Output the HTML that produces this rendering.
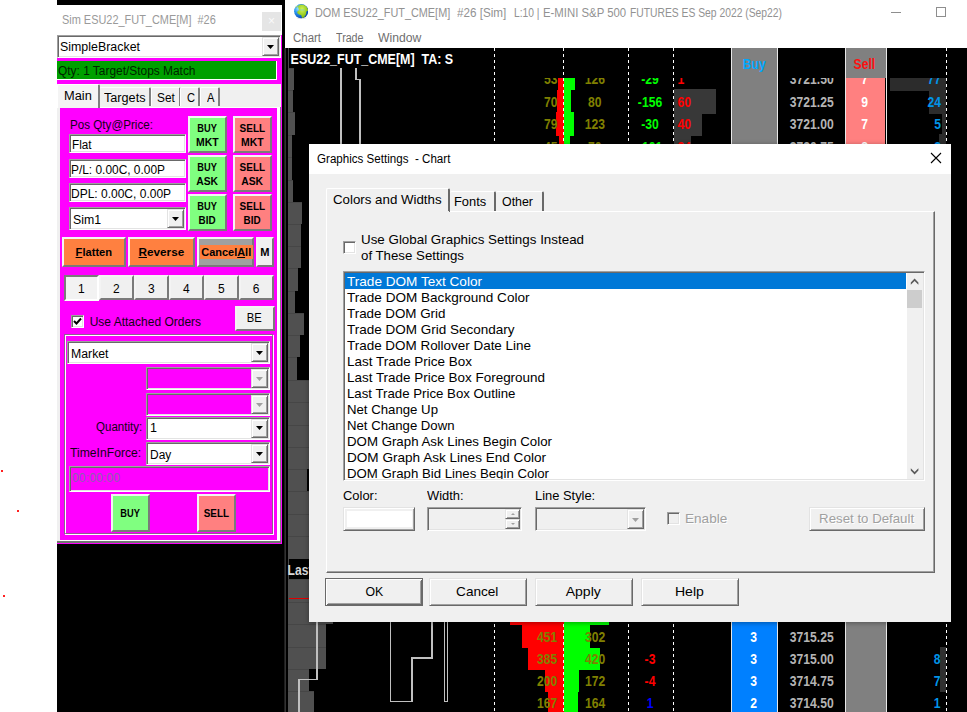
<!DOCTYPE html>
<html lang="en"><head><meta charset="utf-8"><title>Sierra Chart DOM - Graphics Settings</title>
<style>
html,body{margin:0;padding:0;background:#fff}
#root{position:relative;width:967px;height:712px;overflow:hidden;background:#fff;font-family:"Liberation Sans",sans-serif;font-size:12px;color:#000}
#root div{position:absolute;box-sizing:border-box}
.t{position:absolute;white-space:nowrap;transform-origin:0 50%;display:block}
.tcw{position:absolute;white-space:nowrap;text-align:center;display:block}
.tc{display:inline-block;transform-origin:50% 50%}
.ui{font-family:"Liberation Sans",sans-serif}
.b{font-weight:bold}
.mg{background:#ff00ff}
.face{background:#f0f0f0}
.btn{border:1px solid;border-color:#e3e3e3 #696969 #696969 #e3e3e3;box-shadow:inset 1px 1px 0 #fff,inset -1px -1px 0 #a0a0a0;background:#f0f0f0}
.cbtn{border:2px solid;border-color:#f4f4f4 #7a7a7a #7a7a7a #f4f4f4}
.sunk{border:1px solid;border-color:#a0a0a0 #fff #fff #a0a0a0;box-shadow:inset 1px 1px 0 #696969,inset -1px -1px 0 #e3e3e3;background:#fff}
.grn{background:#80ff80}
.red{background:#ff8080}
.org{background:#ff8040}
.arrow{width:0;height:0;border-left:4px solid transparent;border-right:4px solid transparent;border-top:4px solid #000}
.pt{color:#120016}
svg{position:absolute;left:0;top:0}
svg text{font-family:"Liberation Sans",sans-serif;font-weight:bold}
u{text-decoration:underline}
</style></head>
<body>
<div id="root">
<div style="left:57px;top:0px;width:228px;height:5px;background:#000"></div>
<div style="left:57px;top:544px;width:228px;height:168px;background:#000"></div>
<div style="left:282px;top:0px;width:3px;height:712px;background:#000"></div>
<div style="left:1px;top:470px;width:2px;height:2px;background:#ff2020"></div>
<div style="left:17px;top:510px;width:2px;height:2px;background:#ff2020"></div>
<div style="left:2.5px;top:595px;width:2px;height:2px;background:#ff2020"></div>
<div id="sim" class="mg" style="left:57px;top:5px;width:225px;height:539px;">
<div style="left:0px;top:0px;width:225px;height:30px;background:#fff"></div>
<span class="t" style="left: 5px; top: 6.5px; line-height: 16px; height: 16px; font-size: 12px; color: rgb(154, 154, 154); white-space: pre; transform: scaleX(0.9113);">Sim ESU22_FUT_CME[M]  #26</span>
<div style="left:205px;top:7px;width:19px;height:19px;background:#e5e5e5"></div>
<span class="tcw" style="left:205px;top:8px;width:19px;line-height:16px;height:16px;font-size:12px;color:#fafafa;"><span class="tc">×</span></span>
<div class="sunk" style="left:0px;top:30px;width:224px;height:23px;background:#fff;"></div>
<div class="btn" style="left:205px;top:32px;width:17px;height:19px;"></div>
<div style="left:210px;top:40px;width:7px;height:4px;background:#000;clip-path:polygon(0 0,100% 0,50% 100%);"></div>
<span class="t" style="left: 3px; top: 33.7px; line-height: 16px; height: 16px; font-size: 12.5px; transform: scaleX(0.9926);">SimpleBracket</span>
<div style="left:0px;top:56px;width:220px;height:19px;background:#00a000;border-right:1px solid #fff;border-bottom:1px solid #fff;"></div>
<span class="t" style="left: 0.5px; top: 57.5px; line-height: 16px; height: 16px; font-size: 12.5px; color: rgb(0, 36, 0); transform: scaleX(0.953);">Qty: 1 Target/Stops Match</span>
<div class="face" style="left:0px;top:79px;width:224px;height:24px;"></div>
<div style="left:0px;top:102px;width:224px;height:435.5px;background:#ff00ff;border-style:solid;border-width:1px 4px 3.5px 3px;border-color:#fff #fff #fff #f0f0f0"></div>
<div style="left:223px;top:102px;width:1px;height:435.5px;background:#808080"></div>
<div style="left:0px;top:536px;width:224px;height:1.5px;background:#707870"></div>
<div class="face" style="left:42px;top:82px;width:52px;height:19px;border-top:1px solid #fff;border-left:1px solid #fff;border-right:2px solid #808080;border-radius:2px 2px 0 0"></div>
<span class="t" style="left: 46.6px; top: 84.5px; line-height: 16px; height: 16px; font-size: 12px; transform: scaleX(1.0544);">Targets</span>
<div class="face" style="left:94px;top:82px;width:29.5px;height:19px;border-top:1px solid #fff;border-left:1px solid #fff;border-right:2px solid #808080;border-radius:2px 2px 0 0"></div>
<span class="t" style="left: 100.2px; top: 84.5px; line-height: 16px; height: 16px; font-size: 12px; transform: scaleX(0.988);">Set</span>
<div class="face" style="left:123px;top:82px;width:20px;height:19px;border-top:1px solid #fff;border-left:1px solid #fff;border-right:2px solid #808080;border-radius:2px 2px 0 0"></div>
<span class="t" style="left: 130px; top: 84.5px; line-height: 16px; height: 16px; font-size: 12px; transform: scaleX(0.9225);">C</span>
<div class="face" style="left:143px;top:82px;width:19.5px;height:19px;border-top:1px solid #fff;border-left:1px solid #fff;border-right:2px solid #808080;border-radius:2px 2px 0 0"></div>
<span class="t" style="left: 150px; top: 84.5px; line-height: 16px; height: 16px; font-size: 12px; transform: scaleX(0.9357);">A</span>
<div class="face" style="left:0px;top:79px;width:43px;height:24px;border-left:1px solid #fff;border-top:1px solid #fff;border-right:2px solid #808080;border-radius:2px 2px 0 0;background:#f4f4f4"></div>
<span class="t" style="left: 7.2px; top: 82.5px; line-height: 16px; height: 16px; font-size: 12px; transform: scaleX(1.0686);">Main</span>
<span class="t pt" style="left: 12.6px; top: 112px; line-height: 16px; height: 16px; font-size: 12px; transform: scaleX(0.9702);">Pos Qty@Price:</span>
<div class="sunk" style="left:12px;top:129px;width:117px;height:19px;"></div>
<span class="t" style="left: 14.5px; top: 132px; line-height: 16px; height: 16px; font-size: 12px; transform: scaleX(0.9742);">Flat</span>
<div class="sunk" style="left:12px;top:154px;width:117px;height:19px;"></div>
<span class="t" style="left: 14px; top: 157px; line-height: 16px; height: 16px; font-size: 12px; transform: scaleX(0.9922);">P/L: 0.00C, 0.00P</span>
<div class="sunk" style="left:12px;top:178px;width:117px;height:19px;"></div>
<span class="t" style="left: 14px; top: 181px; line-height: 16px; height: 16px; font-size: 12px;">DPL: 0.00C, 0.00P</span>
<div class="sunk" style="left:12px;top:202px;width:117px;height:23px;background:#fff;"></div>
<div class="btn" style="left:110px;top:204px;width:17px;height:19px;"></div>
<div style="left:115px;top:212px;width:7px;height:4px;background:#000;clip-path:polygon(0 0,100% 0,50% 100%);"></div>
<span class="t" style="left: 16px; top: 206.5px; line-height: 16px; height: 16px; font-size: 12.5px; transform: scaleX(0.983);">Sim1</span>
<div class="cbtn grn" style="left:131px;top:111px;width:39px;height:37px;"></div>
<span class="tcw" style="left:131px;top:116.1px;width:39px;line-height:14px;height:14px;font-size:10.5px;"><span class="tc b" style="transform: scaleX(0.8795);">BUY</span></span>
<span class="tcw" style="left:131px;top:130.1px;width:39px;line-height:14px;height:14px;font-size:10.5px;"><span class="tc b" style="transform: scaleX(0.9934);">MKT</span></span>
<div class="cbtn red" style="left:176px;top:111px;width:39px;height:37px;"></div>
<span class="tcw" style="left:176px;top:116.1px;width:39px;line-height:14px;height:14px;font-size:10.5px;"><span class="tc b" style="transform: scaleX(0.9537);">SELL</span></span>
<span class="tcw" style="left:176px;top:130.1px;width:39px;line-height:14px;height:14px;font-size:10.5px;"><span class="tc b" style="transform: scaleX(0.9934);">MKT</span></span>
<div class="cbtn grn" style="left:131px;top:150px;width:39px;height:37px;"></div>
<span class="tcw" style="left:131px;top:155.1px;width:39px;line-height:14px;height:14px;font-size:10.5px;"><span class="tc b" style="transform: scaleX(0.8795);">BUY</span></span>
<span class="tcw" style="left:131px;top:169.1px;width:39px;line-height:14px;height:14px;font-size:10.5px;"><span class="tc b" style="transform: scaleX(0.9832);">ASK</span></span>
<div class="cbtn red" style="left:176px;top:150px;width:39px;height:37px;"></div>
<span class="tcw" style="left:176px;top:155.1px;width:39px;line-height:14px;height:14px;font-size:10.5px;"><span class="tc b" style="transform: scaleX(0.9537);">SELL</span></span>
<span class="tcw" style="left:176px;top:169.1px;width:39px;line-height:14px;height:14px;font-size:10.5px;"><span class="tc b" style="transform: scaleX(0.9832);">ASK</span></span>
<div class="cbtn grn" style="left:131px;top:189px;width:39px;height:37px;"></div>
<span class="tcw" style="left:131px;top:194.1px;width:39px;line-height:14px;height:14px;font-size:10.5px;"><span class="tc b" style="transform: scaleX(0.8795);">BUY</span></span>
<span class="tcw" style="left:131px;top:208.1px;width:39px;line-height:14px;height:14px;font-size:10.5px;"><span class="tc b" style="transform: scaleX(0.9396);">BID</span></span>
<div class="cbtn red" style="left:176px;top:189px;width:39px;height:37px;"></div>
<span class="tcw" style="left:176px;top:194.1px;width:39px;line-height:14px;height:14px;font-size:10.5px;"><span class="tc b" style="transform: scaleX(0.9537);">SELL</span></span>
<span class="tcw" style="left:176px;top:208.1px;width:39px;line-height:14px;height:14px;font-size:10.5px;"><span class="tc b" style="transform: scaleX(0.9396);">BID</span></span>
<div class="cbtn org" style="left:5px;top:232px;width:64px;height:29.5px;"></div>
<span class="tcw" style="left:5.5px;top:239px;width:63.5px;line-height:16px;height:16px;font-size:11.5px;"><span class="tc b" style="transform: scaleX(0.9681);"><u>F</u>latten</span></span>
<div class="cbtn org" style="left:70.5px;top:232px;width:67px;height:29.5px;"></div>
<span class="tcw" style="left:70.5px;top:239px;width:67px;line-height:16px;height:16px;font-size:11.5px;"><span class="tc b" style="transform: scaleX(1.0216);"><u>R</u>everse</span></span>
<div class="cbtn" style="left:140px;top:232px;width:57px;height:29.5px;background:#a0a0a0"></div>
<div class="org" style="left:142.5px;top:240.4px;width:53px;height:13.2px;"></div>
<span class="tcw" style="left:140px;top:239px;width:58px;line-height:16px;height:16px;font-size:11.5px;"><span class="tc b" style="transform: scaleX(0.9538);">Cancel<u>A</u>ll</span></span>
<div class="cbtn face" style="left:198.5px;top:232px;width:18.5px;height:29.5px;"></div>
<span class="tcw" style="left:198.5px;top:239px;width:18.5px;line-height:16px;height:16px;font-size:11.5px;"><span class="tc b" style="transform: scaleX(0.9642);">M</span></span>
<div style="left:7px;top:270px;width:35px;height:26px;background:#f2f2f2;border:2px solid;border-color:#7a7a7a #fff #fff #7a7a7a"></div>
<span class="tcw" style="left:7px;top:275.5px;width:34.5px;line-height:16px;height:16px;font-size:12px;"><span class="tc">1</span></span>
<div class="cbtn face" style="left:42px;top:270px;width:35px;height:25.4px;"></div>
<span class="tcw" style="left:42px;top:275.5px;width:34.5px;line-height:16px;height:16px;font-size:12px;"><span class="tc">2</span></span>
<div class="cbtn face" style="left:77px;top:270px;width:35px;height:25.4px;"></div>
<span class="tcw" style="left:77px;top:275.5px;width:34.5px;line-height:16px;height:16px;font-size:12px;"><span class="tc">3</span></span>
<div class="cbtn face" style="left:112px;top:270px;width:35px;height:25.4px;"></div>
<span class="tcw" style="left:112px;top:275.5px;width:34.5px;line-height:16px;height:16px;font-size:12px;"><span class="tc">4</span></span>
<div class="cbtn face" style="left:147px;top:270px;width:35px;height:25.4px;"></div>
<span class="tcw" style="left:147px;top:275.5px;width:34.5px;line-height:16px;height:16px;font-size:12px;"><span class="tc">5</span></span>
<div class="cbtn face" style="left:182px;top:270px;width:34.5px;height:25.4px;"></div>
<span class="tcw" style="left:182px;top:275.5px;width:34px;line-height:16px;height:16px;font-size:12px;"><span class="tc">6</span></span>
<div class="cbtn face" style="left:178px;top:300.5px;width:39.5px;height:25px;"></div>
<span class="tcw" style="left:178px;top:305px;width:39.5px;line-height:16px;height:16px;font-size:12.5px;"><span class="tc" style="transform: scaleX(0.8989);">BE</span></span>
<div class="sunk" style="left:14px;top:310px;width:13px;height:13px;"></div>
<svg style="left:16px;top:312px" width="9" height="9" viewBox="0 0 9 9"><path d="M1 4 L3.5 6.5 L8 1.5" fill="none" stroke="#000" stroke-width="2"></path></svg>
<span class="t pt" style="left: 32.7px; top: 308.6px; line-height: 16px; height: 16px; font-size: 12px;">Use Attached Orders</span>
<div style="left:8px;top:330px;width:209px;height:200px;border:1px solid #fff"></div>
<div style="left:7px;top:329px;width:209px;height:200px;border:1px solid rgba(110,120,110,.75)"></div>
<div class="sunk" style="left:10px;top:336px;width:203px;height:23px;background:#fff;"></div>
<div class="btn" style="left:194px;top:338px;width:17px;height:19px;"></div>
<div style="left:199px;top:346px;width:7px;height:4px;background:#000;clip-path:polygon(0 0,100% 0,50% 100%);"></div>
<span class="t" style="left: 14.4px; top: 340.5px; line-height: 16px; height: 16px; font-size: 12.5px; transform: scaleX(0.9816);">Market</span>
<div class="sunk" style="left:89px;top:362px;width:124px;height:23px;background:#ff00ff;"></div>
<div class="btn" style="left:194px;top:364px;width:17px;height:19px;"></div>
<div style="left:199px;top:372px;width:7px;height:4px;background:#a0a0a0;clip-path:polygon(0 0,100% 0,50% 100%);"></div>
<div class="sunk" style="left:89px;top:388px;width:124px;height:23px;background:#ff00ff;"></div>
<div class="btn" style="left:194px;top:390px;width:17px;height:19px;"></div>
<div style="left:199px;top:398px;width:7px;height:4px;background:#a0a0a0;clip-path:polygon(0 0,100% 0,50% 100%);"></div>
<span class="t pt" style="left: 39.3px; top: 414px; line-height: 16px; height: 16px; font-size: 12px; transform: scaleX(0.9619);">Quantity:</span>
<div class="sunk" style="left:89px;top:411.5px;width:124px;height:23px;background:#fff;"></div>
<div class="btn" style="left:194px;top:413.5px;width:17px;height:19px;"></div>
<div style="left:199px;top:421px;width:7px;height:4px;background:#000;clip-path:polygon(0 0,100% 0,50% 100%);"></div>
<span class="t" style="left:93px;top:415px;line-height:16px;height:16px;font-size:12.5px;">1</span>
<span class="t pt" style="left: 13.2px; top: 439.5px; line-height: 16px; height: 16px; font-size: 12px; transform: scaleX(1.0135);">TimeInForce:</span>
<div class="sunk" style="left:89px;top:437px;width:124px;height:23px;background:#fff;"></div>
<div class="btn" style="left:194px;top:439px;width:17px;height:19px;"></div>
<div style="left:199px;top:447px;width:7px;height:4px;background:#000;clip-path:polygon(0 0,100% 0,50% 100%);"></div>
<span class="t" style="left: 93px; top: 442px; line-height: 16px; height: 16px; font-size: 12.5px; transform: scaleX(0.9557);">Day</span>
<div class="sunk" style="left:12px;top:461px;width:201px;height:25.5px;background:#ff00ff"></div>
<span class="t" style="left: 15px; top: 464.5px; line-height: 16px; height: 16px; font-size: 12px; color: rgb(138, 96, 176); transform: scaleX(1.0274);">00:00:00</span>
<div class="cbtn grn" style="left:54px;top:489px;width:38.5px;height:37.5px;"></div>
<span class="tcw" style="left:54px;top:500px;width:38.5px;line-height:16px;height:16px;font-size:10.5px;"><span class="tc b" style="transform: scaleX(0.8795);">BUY</span></span>
<div class="cbtn red" style="left:140px;top:489px;width:38.7px;height:37.5px;"></div>
<span class="tcw" style="left:140px;top:500px;width:39px;line-height:16px;height:16px;font-size:10.5px;"><span class="tc b" style="transform: scaleX(0.9425);">SELL</span></span>
</div>
<div id="dom" style="left:285px;top:0px;width:682px;height:712px;background:#fff;">
<div style="left:0px;top:0px;width:682px;height:48px;background:#fff"></div>
<svg style="left:8.9px;top:4.2px" width="14.4" height="14.8" viewBox="0 0 100 103"><defs><radialGradient id="gl" cx="30%" cy="32%" r="80%"><stop offset="0" stop-color="#9fe2ff"></stop><stop offset=".35" stop-color="#2f9cf0"></stop><stop offset=".8" stop-color="#0b55c0"></stop><stop offset="1" stop-color="#083c96"></stop></radialGradient><radialGradient id="gg" cx="45%" cy="35%" r="75%"><stop offset="0" stop-color="#d0f45a"></stop><stop offset=".6" stop-color="#98cc20"></stop><stop offset="1" stop-color="#6fa010"></stop></radialGradient><clipPath id="gc"><circle cx="50" cy="50" r="49"></circle></clipPath></defs><ellipse cx="52" cy="97" rx="34" ry="5" fill="#d8d8e0"></ellipse><circle cx="50" cy="50" r="49.5" fill="url(#gl)"></circle><g clip-path="url(#gc)" fill="url(#gg)"><path d="M30 13C40 3 62 1 78 10C92 20 100 34 98 46L88 50C84 54 86 60 85 66C84 72 82 76 79 80C73 88 67 99 58 97C52 93 54 81 48 77C38 75 23 70 21 58C24 50 30 46 36 43C32 34 27 22 30 13Z"></path><path d="M10 24C15 16 24 11 29 13C25 20 18 25 11 27Z"></path><path d="M40 37C50 39 58 34 68 37C72 42 76 44 78 48C70 47 66 45 60 46C54 47 48 46 44 44C41 42 40 40 40 37Z" fill="#7cc8c8" opacity=".6"></path></g></svg>
<span class="t" style="left: 29.8px; top: 4.5px; line-height: 16px; height: 16px; font-size: 12px; color: rgb(146, 146, 146); transform: scaleX(0.9052);">DOM ESU22_FUT_CME[M]</span>
<span class="t" style="left: 172px; top: 4.5px; line-height: 16px; height: 16px; font-size: 12px; color: rgb(146, 146, 146); transform: scaleX(0.9713);">#26 [Sim]</span>
<span class="t" style="left: 229px; top: 4.5px; line-height: 16px; height: 16px; font-size: 12px; color: rgb(146, 146, 146); transform: scaleX(0.8553);">L:10 |</span>
<span class="t" style="left: 258.4px; top: 4.5px; line-height: 16px; height: 16px; font-size: 12px; color: rgb(146, 146, 146); transform: scaleX(0.9473);">E-MINI S&amp;P 500</span>
<span class="t" style="left: 345.3px; top: 4.5px; line-height: 16px; height: 16px; font-size: 12px; color: rgb(146, 146, 146); transform: scaleX(0.86);">FUTURES ES Sep 2022 (Sep22)</span>
<div style="left:606px;top:12px;width:10px;height:1px;background:#8e8e8e"></div>
<div style="left:651px;top:7px;width:10px;height:10px;border:1px solid #8e8e8e"></div>
<span class="t" style="left: 7.7px; top: 29.5px; line-height: 16px; height: 16px; font-size: 12px; color: rgb(110, 110, 110); transform: scaleX(0.9542);">Chart</span>
<span class="t" style="left: 50.5px; top: 29.5px; line-height: 16px; height: 16px; font-size: 12px; color: rgb(110, 110, 110); transform: scaleX(0.8898);">Trade</span>
<span class="t" style="left: 92.5px; top: 29.5px; line-height: 16px; height: 16px; font-size: 12px; color: rgb(110, 110, 110); transform: scaleX(1.0132);">Window</span>
<svg width="682" height="664" viewBox="285 48 682 664" style="left:0;top:48px" shape-rendering="crispEdges">
<rect x="285" y="48" width="682" height="664" fill="#000"></rect>
<rect x="285" y="48" width="1" height="664" fill="#333"></rect>
<rect x="288" y="48" width="1" height="664" fill="#4a4a4a"></rect>
<rect x="288" y="67.5" width="5.75" height="22" fill="#505050"></rect>
<rect x="288" y="67.5" width="5.75" height="1" fill="#464646"></rect>
<rect x="288" y="89.5" width="4.5" height="22.5" fill="#505050"></rect>
<rect x="288" y="89.5" width="4.5" height="1" fill="#464646"></rect>
<rect x="288" y="112" width="7.2" height="22.5" fill="#505050"></rect>
<rect x="288" y="112" width="7.2" height="1" fill="#464646"></rect>
<rect x="288" y="134.5" width="4" height="22.5" fill="#505050"></rect>
<rect x="288" y="134.5" width="4" height="1" fill="#464646"></rect>
<rect x="288" y="157" width="4" height="22.5" fill="#505050"></rect>
<rect x="288" y="157" width="4" height="1" fill="#464646"></rect>
<rect x="288" y="179.5" width="5" height="22" fill="#505050"></rect>
<rect x="288" y="179.5" width="5" height="1" fill="#464646"></rect>
<rect x="288" y="201.5" width="14.2" height="22.5" fill="#505050"></rect>
<rect x="288" y="201.5" width="14.2" height="1" fill="#464646"></rect>
<rect x="288" y="224" width="13.2" height="22" fill="#505050"></rect>
<rect x="288" y="224" width="13.2" height="1" fill="#464646"></rect>
<rect x="288" y="246" width="12.5" height="22" fill="#505050"></rect>
<rect x="288" y="246" width="12.5" height="1" fill="#464646"></rect>
<rect x="288" y="268" width="10" height="22.5" fill="#505050"></rect>
<rect x="288" y="268" width="10" height="1" fill="#464646"></rect>
<rect x="288" y="290.5" width="7.4" height="22.5" fill="#505050"></rect>
<rect x="288" y="290.5" width="7.4" height="1" fill="#464646"></rect>
<rect x="288" y="313" width="15.7" height="22" fill="#505050"></rect>
<rect x="288" y="313" width="15.7" height="1" fill="#464646"></rect>
<rect x="288" y="335" width="12" height="22" fill="#505050"></rect>
<rect x="288" y="335" width="12" height="1" fill="#464646"></rect>
<rect x="288" y="357" width="8.7" height="23" fill="#505050"></rect>
<rect x="288" y="357" width="8.7" height="1" fill="#464646"></rect>
<rect x="288" y="380" width="24" height="22" fill="#505050"></rect>
<rect x="288" y="380" width="24" height="1" fill="#464646"></rect>
<rect x="288" y="402" width="24" height="22.5" fill="#505050"></rect>
<rect x="288" y="402" width="24" height="1" fill="#464646"></rect>
<rect x="288" y="424.5" width="24" height="22" fill="#505050"></rect>
<rect x="288" y="424.5" width="24" height="1" fill="#464646"></rect>
<rect x="288" y="446.5" width="24" height="22.5" fill="#505050"></rect>
<rect x="288" y="446.5" width="24" height="1" fill="#464646"></rect>
<rect x="288" y="469" width="19.3" height="22" fill="#505050"></rect>
<rect x="288" y="469" width="19.3" height="1" fill="#464646"></rect>
<rect x="288" y="491" width="24" height="22.5" fill="#505050"></rect>
<rect x="288" y="491" width="24" height="1" fill="#464646"></rect>
<rect x="288" y="513.5" width="24" height="22" fill="#505050"></rect>
<rect x="288" y="513.5" width="24" height="1" fill="#464646"></rect>
<rect x="288" y="535.5" width="24" height="23.2" fill="#505050"></rect>
<rect x="288" y="535.5" width="24" height="1" fill="#464646"></rect>
<rect x="288" y="579" width="24" height="22.5" fill="#505050"></rect>
<rect x="288" y="579" width="24" height="1" fill="#464646"></rect>
<rect x="288" y="601.5" width="45" height="22.5" fill="#505050"></rect>
<rect x="288" y="601.5" width="45" height="1" fill="#464646"></rect>
<rect x="288" y="624" width="38" height="23" fill="#505050"></rect>
<rect x="288" y="624" width="38" height="1" fill="#464646"></rect>
<rect x="288" y="647" width="38" height="22" fill="#505050"></rect>
<rect x="288" y="647" width="38" height="1" fill="#464646"></rect>
<rect x="288" y="669" width="21" height="22" fill="#505050"></rect>
<rect x="288" y="669" width="21" height="1" fill="#464646"></rect>
<rect x="288" y="691" width="26" height="21" fill="#505050"></rect>
<rect x="288" y="691" width="26" height="1" fill="#464646"></rect>
<text transform="translate(287.6 574.7) scale(0.868 1)" text-anchor="start" fill="#d8d8d8" font-size="14">Last</text>
<rect x="289" y="598" width="22" height="1.3" fill="#e00000"></rect>
<path d="M341.2 67.5V150 M356 67.5V79.5H360V150" fill="none" stroke="#c0c0c0" stroke-width="1.5"></path>
<path d="M317 620V679.5H299V712 M390.5 620V701.5H412V658H432V620 M444.5 620V701.5H447.3V620" fill="none" stroke="#c0c0c0" stroke-width="1.5"></path>
<rect x="558" y="78" width="5.5" height="12" fill="#ff0000"></rect>
<rect x="563.5" y="78" width="11.5" height="12" fill="#00ff00"></rect>
<rect x="557" y="90" width="6.5" height="22" fill="#ff0000"></rect>
<rect x="563.5" y="90" width="7.5" height="22" fill="#00ff00"></rect>
<rect x="556" y="112" width="7.5" height="24" fill="#ff0000"></rect>
<rect x="563.5" y="112" width="10.5" height="24" fill="#00ff00"></rect>
<rect x="559" y="136" width="4.5" height="14" fill="#ff0000"></rect>
<rect x="563.5" y="136" width="6.5" height="14" fill="#00ff00"></rect>
<rect x="510" y="615" width="53.5" height="10" fill="#ff0000"></rect>
<rect x="563.5" y="615" width="45.5" height="10" fill="#00ff00"></rect>
<rect x="522" y="625" width="41.5" height="22.7" fill="#ff0000"></rect>
<rect x="563.5" y="625" width="26.5" height="22.7" fill="#00ff00"></rect>
<rect x="528" y="647.7" width="35.5" height="22.3" fill="#ff0000"></rect>
<rect x="563.5" y="647.7" width="36.5" height="22.3" fill="#00ff00"></rect>
<rect x="545" y="670" width="18.5" height="22" fill="#ff0000"></rect>
<rect x="563.5" y="670" width="15.5" height="22" fill="#00ff00"></rect>
<rect x="548" y="692" width="15.5" height="20" fill="#ff0000"></rect>
<rect x="563.5" y="692" width="14.5" height="20" fill="#00ff00"></rect>
<rect x="674" y="89" width="42" height="25" fill="#383838"></rect>
<rect x="674" y="114" width="28" height="22" fill="#383838"></rect>
<rect x="674" y="136" width="17" height="14" fill="#383838"></rect>
<rect x="890" y="78" width="56" height="13" fill="#2c2c2c"></rect>
<rect x="929" y="91" width="17" height="22.7" fill="#2c2c2c"></rect>
<rect x="942" y="113.7" width="4" height="20.3" fill="#2c2c2c"></rect>
<rect x="939" y="134" width="7" height="16" fill="#2c2c2c"></rect>
<rect x="940" y="647" width="6" height="45" fill="#303030"></rect>
<rect x="731" y="48" width="47" height="664" fill="#e8e8e8"></rect>
<rect x="732" y="48" width="45" height="555" fill="#808080"></rect>
<rect x="732" y="603" width="45" height="109" fill="#0080ff"></rect>
<rect x="845" y="48" width="1" height="664" fill="#e8e8e8"></rect>
<rect x="886" y="48" width="1" height="664" fill="#e8e8e8"></rect>
<rect x="846" y="48" width="40" height="30" fill="#808080"></rect>
<rect x="846" y="78" width="39" height="540" fill="#ff8080"></rect>
<rect x="846" y="618" width="40" height="94" fill="#808080"></rect>
<path d="M494.5 48V712" stroke="#fff" stroke-width="1" stroke-dasharray="3 3" fill="none"></path>
<path d="M563.5 48V712" stroke="#fff" stroke-width="1" stroke-dasharray="3 3" fill="none"></path>
<path d="M628.5 48V712" stroke="#fff" stroke-width="1" stroke-dasharray="3 3" fill="none"></path>
<path d="M673.5 48V712" stroke="#fff" stroke-width="1" stroke-dasharray="3 3" fill="none"></path>
<path d="M946.5 48V712" stroke="#fff" stroke-width="1" stroke-dasharray="3 3" fill="none"></path>
</svg>
<svg width="682" height="664" viewBox="285 48 682 664" style="left:0;top:48px;overflow:visible">
<rect x="284.4" y="48" width="1" height="664" fill="#333"></rect>
<text x="290.6" y="63.8" fill="#fff" font-size="14" textLength="162.6" lengthAdjust="spacingAndGlyphs" xml:space="preserve">ESU22_FUT_CME[M]  TA: S</text>
<text transform="translate(754.2 68.6) scale(0.868 1)" text-anchor="middle" fill="#00a8ff" font-size="14">Buy</text>
<text transform="translate(864.4 68.6) scale(0.868 1)" text-anchor="middle" fill="#ff1010" font-size="14">Sell</text>
<clipPath id="cpt"><rect x="285" y="78" width="682" height="70"></rect></clipPath><g clip-path="url(#cpt)">
<text transform="translate(557.5 84.3) scale(0.868 1)" text-anchor="end" fill="#808000" font-size="14">53</text>
<text transform="translate(594.8 84.3) scale(0.868 1)" text-anchor="middle" fill="#808000" font-size="14">126</text>
<text transform="translate(650 84.3) scale(0.868 1)" text-anchor="middle" fill="#00ff00" font-size="14">-29</text>
<text transform="translate(677.5 84.3) scale(0.868 1)" text-anchor="start" fill="#ff0000" font-size="14">1</text>
<text transform="translate(811.7 84.3) scale(0.868 1)" text-anchor="middle" fill="#b4b4b4" font-size="14">3721.50</text>
<text transform="translate(864.5 84.3) scale(0.868 1)" text-anchor="middle" fill="#fff" font-size="14">7</text>
<text transform="translate(941 84.3) scale(0.868 1)" text-anchor="end" fill="#0094e8" font-size="14">77</text>
<text transform="translate(557.5 106.5) scale(0.868 1)" text-anchor="end" fill="#808000" font-size="14">70</text>
<text transform="translate(594.8 106.5) scale(0.868 1)" text-anchor="middle" fill="#808000" font-size="14">80</text>
<text transform="translate(650 106.5) scale(0.868 1)" text-anchor="middle" fill="#00ff00" font-size="14">-156</text>
<text transform="translate(677.5 106.5) scale(0.868 1)" text-anchor="start" fill="#ff0000" font-size="14">60</text>
<text transform="translate(811.7 106.5) scale(0.868 1)" text-anchor="middle" fill="#b4b4b4" font-size="14">3721.25</text>
<text transform="translate(864.5 106.5) scale(0.868 1)" text-anchor="middle" fill="#fff" font-size="14">9</text>
<text transform="translate(941 106.5) scale(0.868 1)" text-anchor="end" fill="#0094e8" font-size="14">24</text>
<text transform="translate(557.5 129.2) scale(0.868 1)" text-anchor="end" fill="#808000" font-size="14">79</text>
<text transform="translate(594.8 129.2) scale(0.868 1)" text-anchor="middle" fill="#808000" font-size="14">123</text>
<text transform="translate(650 129.2) scale(0.868 1)" text-anchor="middle" fill="#00ff00" font-size="14">-30</text>
<text transform="translate(677.5 129.2) scale(0.868 1)" text-anchor="start" fill="#ff0000" font-size="14">40</text>
<text transform="translate(811.7 129.2) scale(0.868 1)" text-anchor="middle" fill="#b4b4b4" font-size="14">3721.00</text>
<text transform="translate(864.5 129.2) scale(0.868 1)" text-anchor="middle" fill="#fff" font-size="14">7</text>
<text transform="translate(941 129.2) scale(0.868 1)" text-anchor="end" fill="#0094e8" font-size="14">5</text>
<text transform="translate(557.5 151.5) scale(0.868 1)" text-anchor="end" fill="#808000" font-size="14">45</text>
<text transform="translate(594.8 151.5) scale(0.868 1)" text-anchor="middle" fill="#808000" font-size="14">70</text>
<text transform="translate(650 151.5) scale(0.868 1)" text-anchor="middle" fill="#00ff00" font-size="14">-101</text>
<text transform="translate(677.5 151.5) scale(0.868 1)" text-anchor="start" fill="#ff0000" font-size="14">24</text>
<text transform="translate(811.7 151.5) scale(0.868 1)" text-anchor="middle" fill="#b4b4b4" font-size="14">3720.75</text>
<text transform="translate(864.5 151.5) scale(0.868 1)" text-anchor="middle" fill="#fff" font-size="14">8</text>
<text transform="translate(941 151.5) scale(0.868 1)" text-anchor="end" fill="#0094e8" font-size="14">3</text>
</g>
<text transform="translate(557.3 641.8) scale(0.868 1)" text-anchor="end" fill="#808000" font-size="14">451</text>
<text transform="translate(595 641.8) scale(0.868 1)" text-anchor="middle" fill="#808000" font-size="14">302</text>
<text transform="translate(753.7 641.8) scale(0.868 1)" text-anchor="middle" fill="#fff" font-size="14">3</text>
<text transform="translate(811.7 641.8) scale(0.868 1)" text-anchor="middle" fill="#b4b4b4" font-size="14">3715.25</text>
<text transform="translate(557.3 663.5) scale(0.868 1)" text-anchor="end" fill="#808000" font-size="14">385</text>
<text transform="translate(595 663.5) scale(0.868 1)" text-anchor="middle" fill="#808000" font-size="14">420</text>
<text transform="translate(650 663.5) scale(0.868 1)" text-anchor="middle" fill="#ff0000" font-size="14">-3</text>
<text transform="translate(753.7 663.5) scale(0.868 1)" text-anchor="middle" fill="#fff" font-size="14">3</text>
<text transform="translate(811.7 663.5) scale(0.868 1)" text-anchor="middle" fill="#b4b4b4" font-size="14">3715.00</text>
<text transform="translate(940.5 663.5) scale(0.868 1)" text-anchor="end" fill="#0094e8" font-size="14">8</text>
<text transform="translate(557.3 685.7) scale(0.868 1)" text-anchor="end" fill="#808000" font-size="14">200</text>
<text transform="translate(595 685.7) scale(0.868 1)" text-anchor="middle" fill="#808000" font-size="14">172</text>
<text transform="translate(650 685.7) scale(0.868 1)" text-anchor="middle" fill="#ff0000" font-size="14">-4</text>
<text transform="translate(753.7 685.7) scale(0.868 1)" text-anchor="middle" fill="#fff" font-size="14">3</text>
<text transform="translate(811.7 685.7) scale(0.868 1)" text-anchor="middle" fill="#b4b4b4" font-size="14">3714.75</text>
<text transform="translate(940.5 685.7) scale(0.868 1)" text-anchor="end" fill="#0094e8" font-size="14">7</text>
<text transform="translate(557.3 707.8) scale(0.868 1)" text-anchor="end" fill="#808000" font-size="14">167</text>
<text transform="translate(595 707.8) scale(0.868 1)" text-anchor="middle" fill="#808000" font-size="14">164</text>
<text transform="translate(650 707.8) scale(0.868 1)" text-anchor="middle" fill="#0000ff" font-size="14">1</text>
<text transform="translate(753.7 707.8) scale(0.868 1)" text-anchor="middle" fill="#fff" font-size="14">2</text>
<text transform="translate(811.7 707.8) scale(0.868 1)" text-anchor="middle" fill="#b4b4b4" font-size="14">3714.50</text>
<text transform="translate(940.5 707.8) scale(0.868 1)" text-anchor="end" fill="#0094e8" font-size="14">1</text>
</svg>
</div>
<div id="dlg" class="face" style="left:309px;top:144px;width:642px;height:478px;box-shadow:0 1px 5px rgba(0,0,0,.35);">
<div style="left:0px;top:0px;width:642px;height:29.6px;background:#fff"></div>
<span class="t" style="left: 7.8px; top: 7px; line-height: 16px; height: 16px; font-size: 12px; white-space: pre; transform: scaleX(0.9662);">Graphics Settings  - Chart</span>
<svg style="left:621.3px;top:8px" width="12" height="12" viewBox="0 0 12 12"><path d="M1 1L11 11M11 1L1 11" stroke="#000" stroke-width="1.1" fill="none"></path></svg>
<div style="left:17px;top:67px;width:609px;height:361.5px;border:1px solid;border-color:#fff #696969 #696969 #fff;box-shadow:inset -1px -1px 0 #a0a0a0"></div>
<div class="face" style="left:141px;top:47px;width:46px;height:20px;border-top:1px solid #fff;border-right:2px solid #696969;border-radius:2px 2px 0 0;"></div>
<span class="t" style="left: 145px; top: 49.6px; line-height: 16px; height: 16px; font-size: 13px; transform: scaleX(0.9903);">Fonts</span>
<div class="face" style="left:187px;top:47px;width:48px;height:20px;border-top:1px solid #fff;border-right:2px solid #696969;border-radius:2px 2px 0 0;"></div>
<span class="t" style="left: 193.4px; top: 49.6px; line-height: 16px; height: 16px; font-size: 13px; transform: scaleX(0.9534);">Other</span>
<div class="face" style="left:17px;top:44.4px;width:124px;height:24px;border-left:1px solid #fff;border-top:1px solid #fff;border-right:2px solid #696969;border-radius:2px 2px 0 0;"></div>
<div class="face" style="left:18px;top:67px;width:122px;height:2px;"></div>
<span class="t" style="left: 24px; top: 47.5px; line-height: 16px; height: 16px; font-size: 13px; transform: scaleX(1.0224);">Colors and Widths</span>
<div class="sunk" style="left:34px;top:96.5px;width:13px;height:13px;"></div>
<span class="t" style="left: 52px; top: 87.5px; line-height: 16px; height: 16px; font-size: 13px; transform: scaleX(1.0287);">Use Global Graphics Settings Instead</span>
<span class="t" style="left: 52px; top: 103.5px; line-height: 16px; height: 16px; font-size: 13px; transform: scaleX(1.0204);">of These Settings</span>
<div class="sunk" style="left:34px;top:127px;width:582px;height:210px;"></div>
<div id="lb" style="left:36px;top:129px;width:578px;height:206px;overflow:hidden;">
<div style="left:0px;top:0px;width:561px;height:16px;background:#0078d7"></div>
<span class="t" style="left: 2.4px; top: 0.6px; line-height: 16px; height: 16px; font-size: 13px; color: rgb(255, 255, 255); transform: scaleX(1.0439);">Trade DOM Text Color</span>
<span class="t" style="left: 2.4px; top: 16.6px; line-height: 16px; height: 16px; font-size: 13px; transform: scaleX(1.0423);">Trade DOM Background Color</span>
<span class="t" style="left: 2.4px; top: 32.6px; line-height: 16px; height: 16px; font-size: 13px; transform: scaleX(1.0304);">Trade DOM Grid</span>
<span class="t" style="left: 2.4px; top: 48.6px; line-height: 16px; height: 16px; font-size: 13px; transform: scaleX(1.0381);">Trade DOM Grid Secondary</span>
<span class="t" style="left: 2.4px; top: 64.6px; line-height: 16px; height: 16px; font-size: 13px; transform: scaleX(1.0338);">Trade DOM Rollover Date Line</span>
<span class="t" style="left: 2.4px; top: 80.6px; line-height: 16px; height: 16px; font-size: 13px; transform: scaleX(1.0359);">Last Trade Price Box</span>
<span class="t" style="left: 2.4px; top: 96.6px; line-height: 16px; height: 16px; font-size: 13px; transform: scaleX(1.0339);">Last Trade Price Box Foreground</span>
<span class="t" style="left: 2.4px; top: 112.6px; line-height: 16px; height: 16px; font-size: 13px; transform: scaleX(1.0182);">Last Trade Price Box Outline</span>
<span class="t" style="left: 2.4px; top: 128.6px; line-height: 16px; height: 16px; font-size: 13px; transform: scaleX(1.0153);">Net Change Up</span>
<span class="t" style="left: 2.4px; top: 144.6px; line-height: 16px; height: 16px; font-size: 13px; transform: scaleX(1.0119);">Net Change Down</span>
<span class="t" style="left: 2.4px; top: 160.6px; line-height: 16px; height: 16px; font-size: 13px; transform: scaleX(1.0205);">DOM Graph Ask Lines Begin Color</span>
<span class="t" style="left: 2.4px; top: 176.6px; line-height: 16px; height: 16px; font-size: 13px; transform: scaleX(1.0433);">DOM Graph Ask Lines End Color</span>
<span class="t" style="left: 2.4px; top: 192.6px; line-height: 16px; height: 16px; font-size: 13px; transform: scaleX(1.0166);">DOM Graph Bid Lines Begin Color</span>
<div style="left:562px;top:0px;width:16px;height:206px;background:#f0f0f0"></div>
<div style="left:562px;top:17px;width:15px;height:18px;background:#cdcdcd"></div>
<svg style="left:565.3px;top:5.3px" width="9" height="7" viewBox="0 0 9 7"><path d="M4.6 0.5L8.4 4.4V6.7L4.6 2.9L0.8 6.7V4.4Z" fill="#5a5a5a"></path></svg>
<svg style="left:565.3px;top:194.5px" width="9" height="7" viewBox="0 0 9 7"><path d="M4.6 6.5L8.4 2.6V0.3L4.6 4.1L0.8 0.3V2.6Z" fill="#5a5a5a"></path></svg>
</div>
<span class="t" style="left: 34.4px; top: 343.6px; line-height: 16px; height: 16px; font-size: 13px; transform: scaleX(0.9946);">Color:</span>
<span class="t" style="left: 117.8px; top: 343.6px; line-height: 16px; height: 16px; font-size: 13px; transform: scaleX(0.9934);">Width:</span>
<span class="t" style="left: 225.8px; top: 343.6px; line-height: 16px; height: 16px; font-size: 13px; transform: scaleX(0.9917);">Line Style:</span>
<div class="btn" style="left:34px;top:363px;width:72px;height:24px;"></div>
<div style="left:38px;top:367px;width:64.5px;height:16px;background:#fff"></div>
<div class="sunk" style="left:118px;top:363px;width:95px;height:24px;background:#f0f0f0"></div>
<div class="btn" style="left:196px;top:365px;width:15px;height:10px;"></div>
<div class="btn" style="left:196px;top:375px;width:15px;height:10px;"></div>
<div style="left:201.5px;top:368.5px;width:4px;height:2px;width:0;height:0;border-left:2px solid transparent;border-right:2px solid transparent;border-bottom:2.5px solid #a0a0a0"></div>
<div style="left:201.5px;top:379px;width:4px;height:2px;width:0;height:0;border-left:2px solid transparent;border-right:2px solid transparent;border-top:2.5px solid #a0a0a0"></div>
<div class="sunk" style="left:226px;top:363px;width:111px;height:24px;background:#f0f0f0;"></div>
<div class="btn" style="left:318px;top:365px;width:17px;height:20px;"></div>
<div style="left:323px;top:374px;width:7px;height:4px;background:#a0a0a0;clip-path:polygon(0 0,100% 0,50% 100%);"></div>
<div class="sunk" style="left:358px;top:368px;width:12.5px;height:12.5px;background:#f0f0f0"></div>
<span class="t" style="left: 376px; top: 366.8px; line-height: 16px; height: 16px; font-size: 13px; color: rgb(160, 160, 160); text-shadow: rgb(255, 255, 255) 1px 1px 0px; transform: scaleX(1.0448);">Enable</span>
<div class="btn" style="left:500px;top:363px;width:116px;height:24px;"></div>
<span class="tcw" style="left:500px;top:366.5px;width:116px;line-height:16px;height:16px;font-size:13px;color:#a0a0a0;text-shadow:1px 1px 0 #fff;"><span class="tc" style="transform: scaleX(1.0191);">Reset to Default</span></span>
<div class="btn" style="left:16px;top:433.5px;width:98px;height:28.5px;border-color:#696969;box-shadow:inset 1px 1px 0 #fff,inset -1px -1px 0 #696969,inset 2px 2px 0 #f0f0f0,inset -2px -2px 0 #a0a0a0"></div>
<span class="tcw" style="left:16px;top:440px;width:98px;line-height:16px;height:16px;font-size:13px;"><span class="tc" style="transform: scaleX(0.947);">OK</span></span>
<div class="btn" style="left:120px;top:433.5px;width:98px;height:28.5px;"></div>
<span class="tcw" style="left:119px;top:440px;width:99px;line-height:16px;height:16px;font-size:13px;"><span class="tc" style="transform: scaleX(1.0453);">Cancel</span></span>
<div class="btn" style="left:226px;top:433.5px;width:98px;height:28.5px;"></div>
<span class="tcw" style="left:225px;top:440px;width:99px;line-height:16px;height:16px;font-size:13px;"><span class="tc" style="transform: scaleX(1.082);">Apply</span></span>
<div class="btn" style="left:332px;top:433.5px;width:98px;height:28.5px;"></div>
<span class="tcw" style="left:331px;top:440px;width:99px;line-height:16px;height:16px;font-size:13px;"><span class="tc" style="transform: scaleX(1.0841);">Help</span></span>
</div>
</div>

</body></html>
